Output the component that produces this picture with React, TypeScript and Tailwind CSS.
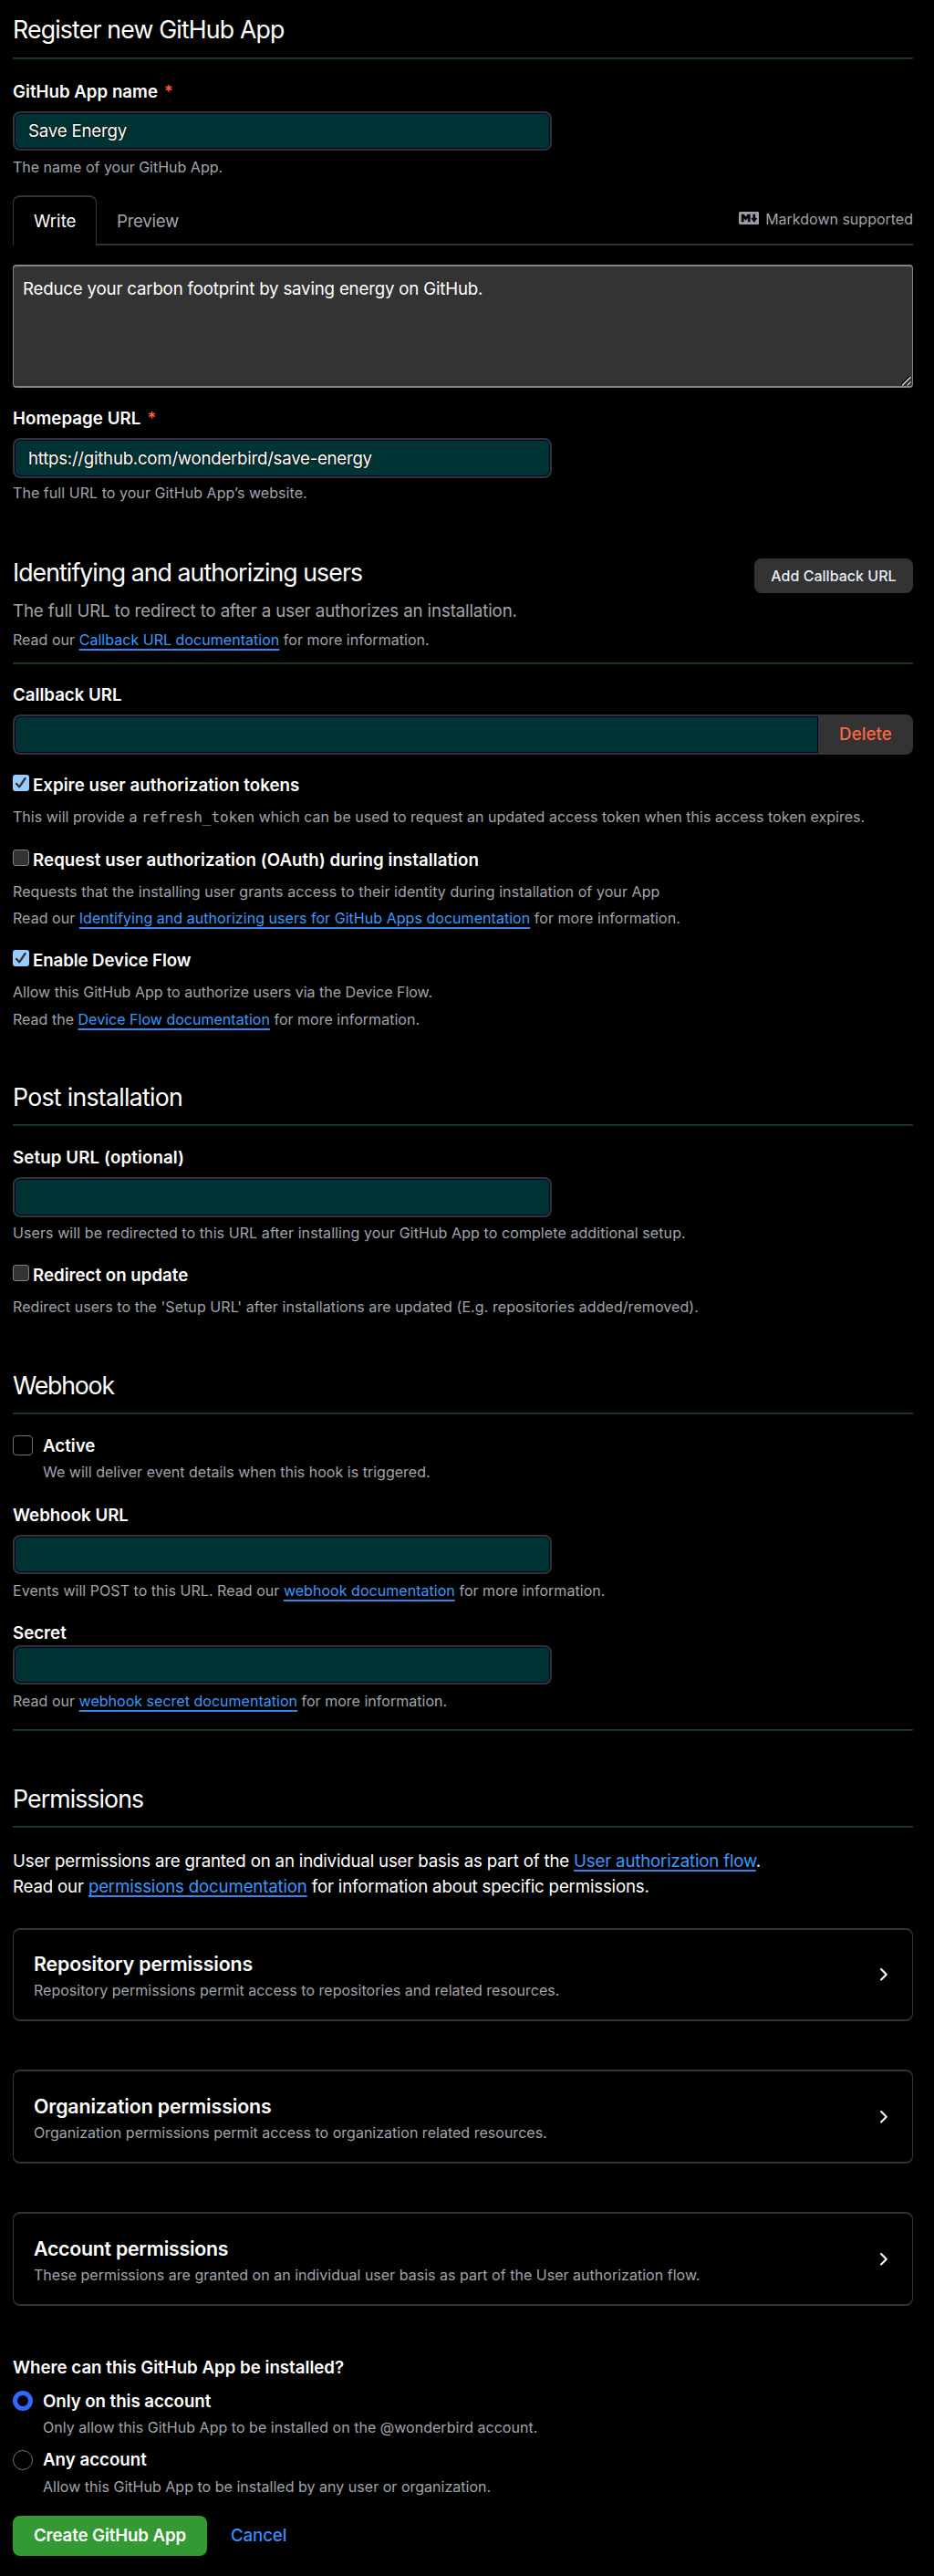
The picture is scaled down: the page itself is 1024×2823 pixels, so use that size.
import type { ReactNode } from 'react';

const LABEL = 'text-[18.7px] leading-[27px] font-semibold text-white';
const CAPTION = 'text-[16px] leading-[28px] text-[#a2a4ac] whitespace-nowrap';

function Rule({ className }: { className: string }) {
  return <div className={`h-[2px] border-t border-[#333333] bg-[#063030] ${className}`} />;
}

function Heading({ children, className }: { children: ReactNode; className: string }) {
  return (
    <h2 className={`text-[26.7px] leading-[40px] font-normal whitespace-nowrap text-white ${className}`}>{children}</h2>
  );
}

function Link({ children, className = 'underline-offset-[4px]' }: { children: ReactNode; className?: string }) {
  return (
    <a
      href="#"
      className={`text-[#3b99fc] underline decoration-[#3385f0] decoration-2 [text-decoration-skip-ink:none] ${className}`}
    >
      {children}
    </a>
  );
}

function Required() {
  return <span className="ml-[7px] text-[18px] leading-none text-[#ff5c3d]">*</span>;
}

function Field({ value = '', className }: { value?: string; className: string }) {
  return (
    <input
      type="text"
      defaultValue={value}
      className={`block w-[591px] rounded-[8px] border-2 border-[#333333] bg-[#003333] pr-3 pl-[15px] text-[18.7px] text-white shadow-[inset_0_0_0_1px_#000033] outline-none [text-shadow:0_0_2px_#000,0_0_1px_#000] ${className}`}
    />
  );
}

function SmallCheck({ checked = false }: { checked?: boolean }) {
  return checked ? (
    <span className="mb-[5px] flex h-[18px] w-[18px] shrink-0 items-center justify-center rounded-[3px] bg-[#99ccff]">
      <svg viewBox="0 0 18 18" className="h-[18px] w-[18px]" fill="none">
        <path d="M4 9.8 7.2 13.4 13.6 4" stroke="#333333" strokeWidth="2.3" strokeLinecap="round" strokeLinejoin="round" />
      </svg>
    </span>
  ) : (
    <span className="mb-[5px] h-[18px] w-[18px] shrink-0 rounded-[3px] border border-[#808080] bg-[#333333]" />
  );
}

function CheckRow({ checked, children, className }: { checked?: boolean; children: ReactNode; className: string }) {
  return (
    <label className={`flex items-center gap-[4px] whitespace-nowrap ${LABEL} ${className}`}>
      <SmallCheck checked={checked} />
      <span>{children}</span>
    </label>
  );
}

function Card({ title, text, className }: { title: ReactNode; text: ReactNode; className: string }) {
  return (
    <section
      className={`flex items-center justify-between rounded-[8px] border-x border-y-2 border-[#333333] pr-[22px] pl-[22px] ${className}`}
    >
      <div className="pt-[5px]">
        <h3 className="text-[21.3px] leading-[28px] font-semibold text-white">{title}</h3>
        <p className={`mt-[1px] ${CAPTION}`}>{text}</p>
      </div>
      <svg viewBox="0 0 16 16" className="h-[21.5px] w-[21.5px]" fill="#ffffff">
        <path d="M6.22 3.22a.75.75 0 0 1 1.06 0l4.25 4.25a.75.75 0 0 1 0 1.06l-4.25 4.25a.751.751 0 0 1-1.042-.018.751.751 0 0 1-.018-1.042L9.94 8 6.22 4.28a.75.75 0 0 1 0-1.06Z" />
      </svg>
    </section>
  );
}

export default function App() {
  return (
    <main className="h-[2823px] w-[1024px] overflow-hidden bg-black pt-[12px] pr-[23px] pl-[14px] font-['Inter',sans-serif] text-white">
      <Heading className="tracking-[-0.834px]">Register new GitHub App</Heading>
      <Rule className="mt-[11px]" />

      <div className={`mt-[22px] ${LABEL}`}>
        GitHub App name
        <Required />
      </div>
      <Field value="Save Energy" className="mt-[8px] h-[43px] tracking-[-0.205px]" />
      <p className={`mt-[4px] ${CAPTION}`}>The name of your GitHub App.</p>

      <div className="mt-[17px] flex h-[55px]">
        <div className="w-[92px] rounded-t-[8px] border-x border-t-2 border-[#333333] pt-[13px] pl-[22px] text-[18.7px] leading-[27px]">
          Write
        </div>
        <div className="flex flex-1 justify-between border-b-2 border-[#333333]">
          <span className="pt-[15px] pl-[22px] text-[18.7px] leading-[27px] tracking-[-0.296px] text-[#a2a4ac]">
            Preview
          </span>
          <span className="flex pt-[12px] text-[16px] leading-[28px] text-[#a2a4ac]">
            <svg viewBox="0 3 16 10" className="mt-[6px] mr-[7px] h-[14px] w-[22.4px]" fill="#9c9ca8">
              <path d="M14.85 3c.63 0 1.15.52 1.14 1.15v7.7c0 .63-.51 1.15-1.15 1.15H1.15C.52 13 0 12.48 0 11.84V4.15C0 3.52.52 3 1.15 3ZM9 11V5H7L5.5 7 4 5H2v6h2V8l1.5 1.92L7 8v3Zm2.99.5L14.5 8H13V5h-2v3H9.5Z" />
            </svg>
            Markdown supported
          </span>
        </div>
      </div>

      <div className="relative mt-[21px] h-[135px] rounded-[4px] border-x border-y-2 border-[#858585] bg-[#333333] pt-[11px] pl-[10px] text-[18.7px] leading-[27px] tracking-[-0.197px]">
        Reduce your carbon footprint by saving energy on GitHub.
        <svg viewBox="0 0 11 11" className="absolute right-[1px] bottom-0 h-[11px] w-[11px]" fill="none">
          <path d="M0 10.5 10 .5M6 10.5 10 6.5" stroke="#000000" strokeWidth="3" />
          <path d="M1 10.5 10.5 1M6.5 10.5 10.5 6.5" stroke="#e6e6e6" strokeWidth="1.3" />
        </svg>
      </div>

      <div className={`mt-[20px] tracking-[0.059px] ${LABEL}`}>
        Homepage URL
        <Required />
      </div>
      <Field
        value="https://github.com/wonderbird/save-energy"
        className="mt-[8px] h-[44px] tracking-[-0.271px]"
      />
      <p className={`mt-[2px] tracking-[0.051px] ${CAPTION}`}>The full URL to your GitHub App’s website.</p>

      <div className="mt-[53px] flex h-[40px] items-start justify-between">
        <Heading className="tracking-[-0.942px]">Identifying and authorizing users</Heading>
        <button className="mt-[5px] h-[38px] w-[174px] rounded-[8px] bg-[#333333] text-[16px] font-medium tracking-[0.024px] whitespace-nowrap text-[#e6edf3]">
          Add Callback URL
        </button>
      </div>
      <p className="mt-[9px] text-[18.7px] leading-[27px] tracking-[-0.129px] text-[#a2a4ac]">
        The full URL to redirect to after a user authorizes an installation.
      </p>
      <p className={`mt-[4px] tracking-[0.031px] ${CAPTION}`}>
        Read our <Link>Callback URL documentation</Link> for more information.
      </p>
      <Rule className="mt-[11px]" />

      <div className={`mt-[20px] ${LABEL}`}>Callback URL</div>
      <div className="mt-[8px] flex h-[44px]">
        <input
          type="text"
          className="min-w-0 flex-1 rounded-l-[8px] border-2 border-r-0 border-[#333333] bg-[#003333] px-[15px] shadow-[inset_0_0_0_1px_#000033] outline-none"
        />
        <button className="w-[104px] rounded-r-[8px] bg-[#333333] text-[18.7px] font-medium tracking-[0.075px] text-[#ff6640]">
          Delete
        </button>
      </div>

      <CheckRow checked className="mt-[20px] tracking-[0.03px]">
        Expire user authorization tokens
      </CheckRow>
      <p className={`mt-[7px] tracking-[0.015px] ${CAPTION}`}>
        This will provide a{' '}
        <code className="font-['DejaVu_Sans_Mono',monospace] text-[16px] leading-none tracking-[-0.08px]">
          refresh_token
        </code>{' '}
        which can be used to request an updated access token when this access token expires.
      </p>

      <CheckRow className="mt-[20px] tracking-[0.061px]">Request user authorization (OAuth) during installation</CheckRow>
      <p className={`mt-[7px] tracking-[0.081px] ${CAPTION}`}>
        Requests that the installing user grants access to their identity during installation of your App
      </p>
      <p className={`mt-[1px] tracking-[0.04px] ${CAPTION}`}>
        Read our <Link>Identifying and authorizing users for GitHub Apps documentation</Link> for more information.
      </p>

      <CheckRow checked className="mt-[19px] tracking-[-0.098px]">
        Enable Device Flow
      </CheckRow>
      <p className={`mt-[7px] ${CAPTION}`}>Allow this GitHub App to authorize users via the Device Flow.</p>
      <p className={`mt-[2px] tracking-[0.02px] ${CAPTION}`}>
        Read the <Link>Device Flow documentation</Link> for more information.
      </p>

      <Heading className="mt-[51px] tracking-[-0.719px]">Post installation</Heading>
      <Rule className="mt-[10px]" />

      <div className={`mt-[21px] tracking-[0.113px] ${LABEL}`}>Setup URL (optional)</div>
      <Field className="mt-[8px] h-[44px]" />
      <p className={`mt-[3px] tracking-[0.087px] ${CAPTION}`}>
        Users will be redirected to this URL after installing your GitHub App to complete additional setup.
      </p>
      <CheckRow className="mt-[19px]">Redirect on update</CheckRow>
      <p className={`mt-[7px] tracking-[0.07px] ${CAPTION}`}>
        Redirect users to the 'Setup URL' after installations are updated (E.g. repositories added/removed).
      </p>

      <Heading className="mt-[52px] tracking-[-1.2px]">Webhook</Heading>
      <Rule className="mt-[10px]" />

      <div className="mt-[21px] flex gap-[11px]">
        <span className="mt-[2px] h-[22px] w-[22px] rounded-[4px] border border-[#707078]" />
        <div>
          <div className={LABEL}>Active</div>
          <p className={`mt-[1px] tracking-[0.017px] ${CAPTION}`}>
            We will deliver event details when this hook is triggered.
          </p>
        </div>
      </div>

      <div className={`mt-[20px] ${LABEL}`}>Webhook URL</div>
      <Field className="mt-[8px] h-[43px]" />
      <p className={`mt-[4px] tracking-[0.04px] ${CAPTION}`}>
        Events will POST to this URL. Read our <Link>webhook documentation</Link> for more information.
      </p>

      <div className={`mt-[19px] ${LABEL}`}>Secret</div>
      <Field className="h-[43px]" />
      <p className={`mt-[4px] tracking-[0.02px] ${CAPTION}`}>
        Read our <Link>webhook secret documentation</Link> for more information.
      </p>
      <Rule className="mt-[17px]" />

      <Heading className="mt-[54px] tracking-[-0.917px]">Permissions</Heading>
      <Rule className="mt-[10px]" />

      <p className="mt-[23px] text-[18.7px] leading-[27px] tracking-[-0.187px]">
        User permissions are granted on an individual user basis as part of the{' '}
        <Link className="underline-offset-[3px]">User authorization flow</Link>.
      </p>
      <p className="mt-[1px] text-[18.7px] leading-[27px] tracking-[-0.187px]">
        Read our <Link className="underline-offset-[3px]">permissions documentation</Link> for information about specific
        permissions.
      </p>

      <Card
        className="mt-[32px] h-[102px]"
        title={<span className="tracking-[-0.122px]">Repository permissions</span>}
        text={<span className="tracking-[0.02px]">Repository permissions permit access to repositories and related resources.</span>}
      />
      <Card
        className="mt-[53px] h-[103px]"
        title={<span className="tracking-[-0.109px]">Organization permissions</span>}
        text={<span className="tracking-[0.02px]">Organization permissions permit access to organization related resources.</span>}
      />
      <Card
        className="mt-[53px] h-[103px]"
        title={<span className="tracking-[-0.248px]">Account permissions</span>}
        text={
          <span className="tracking-[0.02px]">
            These permissions are granted on an individual user basis as part of the User authorization flow.
          </span>
        }
      />

      <div className={`mt-[54px] ${LABEL}`}>Where can this GitHub App be installed?</div>
      <div className="mt-[10px] flex gap-[11px]">
        <span className="mt-[2px] h-[22px] w-[22px] rounded-full border-[5.5px] border-[#3366ff]" />
        <div>
          <div className={`tracking-[-0.056px] ${LABEL}`}>Only on this account</div>
          <p className={`mt-[1px] tracking-[0.027px] ${CAPTION}`}>
            Only allow this GitHub App to be installed on the @wonderbird account.
          </p>
        </div>
      </div>
      <div className="mt-[8px] flex gap-[11px]">
        <span className="mt-[3px] h-[22px] w-[22px] rounded-full border border-[#707078]" />
        <div>
          <div className={LABEL}>Any account</div>
          <p className={`mt-[2px] tracking-[0.02px] ${CAPTION}`}>
            Allow this GitHub App to be installed by any user or organization.
          </p>
        </div>
      </div>

      <div className="mt-[18px] flex h-[44px] items-center gap-[26px] text-[18.7px]">
        <button className="h-[44px] w-[213px] rounded-[8px] bg-[#339933] font-semibold tracking-[-0.121px] whitespace-nowrap text-white">
          Create GitHub App
        </button>
        <a href="#" className="font-medium tracking-[-0.124px] text-[#3b8cfc]">
          Cancel
        </a>
      </div>
    </main>
  );
}
